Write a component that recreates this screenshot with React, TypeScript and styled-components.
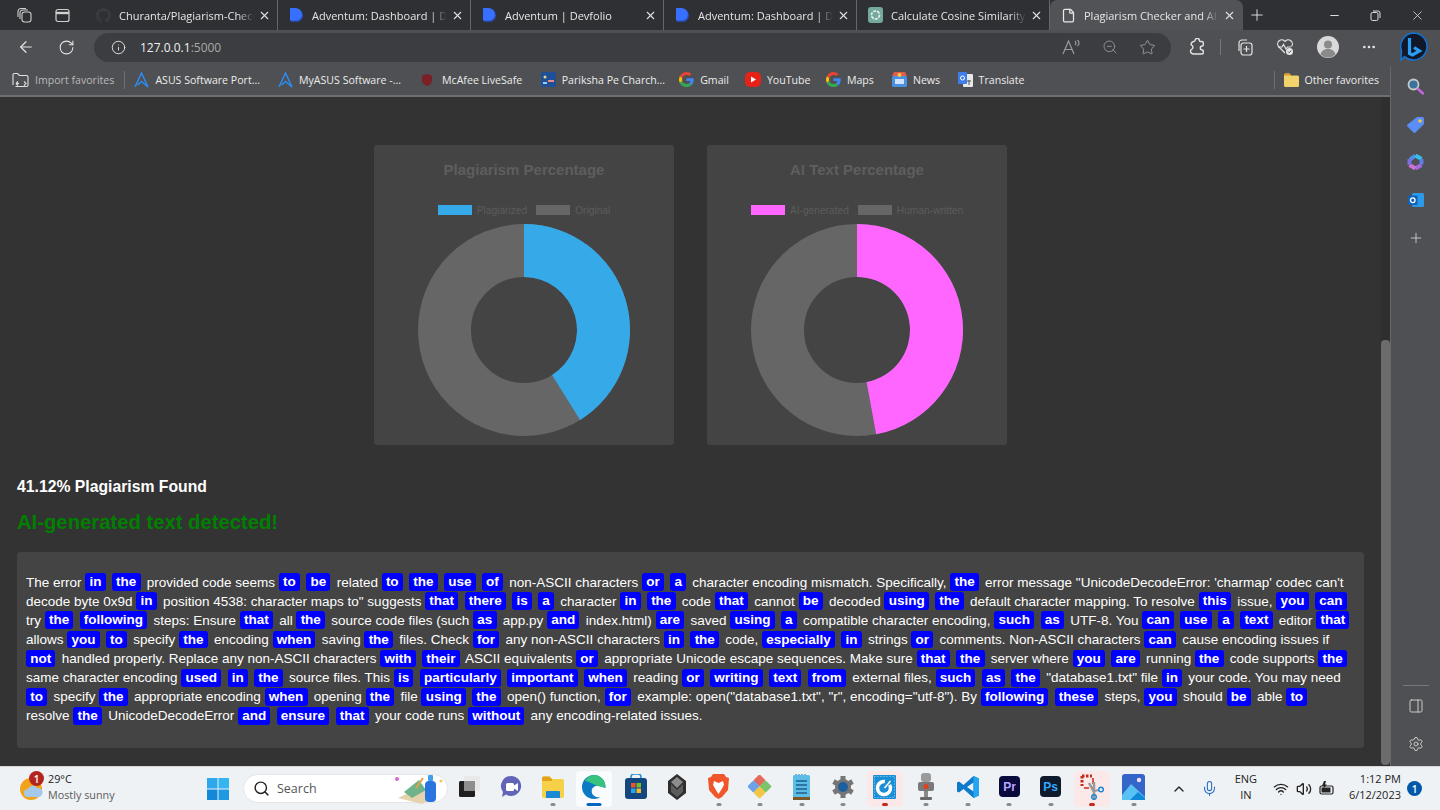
import React from "react";
import styled, { createGlobalStyle } from "styled-components";
import {
  ArrowLeft, RotateCw, Info, Star, ZoomOut, Plus, X, Minus, Search, Mic, Wifi, Volume2,
  ChevronUp, MoreHorizontal, Settings, PanelRight, File,
} from "lucide-react";

const Global = createGlobalStyle`
  html, body { margin: 0; padding: 0; width: 1440px; height: 810px; overflow: hidden; background: #333; }
  #root { width: 1440px; height: 810px; }
  * { box-sizing: border-box; }
`;

const uiFont = `"Open Sans", "Noto Sans", "Liberation Sans", sans-serif`;

const Screen = styled.div`
  width: 1440px; height: 810px; display: flex; flex-direction: column; overflow: hidden;
  font-family: "Liberation Sans", Arial, sans-serif;
`;
const TabBar = styled.div`
  height: 30px; flex: none; display: flex; align-items: center; background: #2f3033; color: #e8e8e8;
  font-family: ${uiFont}; font-size: 11px;
`;
const TabTools = styled.div`
  width: 85px; flex: none; display: flex; align-items: center; gap: 22px; padding-left: 16px; color: #d0d0d0;
`;
const Tab = styled.div<{ $active?: boolean }>`
  width: 193px; height: 30px; flex: none; display: flex; align-items: center; padding: 0 6px 0 11px;
  background: ${(p) => (p.$active ? "#525357" : "transparent")};
  border-radius: ${(p) => (p.$active ? "7px 7px 0 0" : "0")};
  border-right: 1px solid ${(p) => (p.$active ? "transparent" : "#66676a")};
`;
const TabTitle = styled.span`
  flex: 1; margin: 0 4px 0 8px; white-space: nowrap; overflow: hidden; color: #e6e6e6;
  -webkit-mask-image: linear-gradient(90deg, #000 88%, transparent);
  mask-image: linear-gradient(90deg, #000 88%, transparent);
`;
const WindowButtons = styled.div`
  margin-left: auto; display: flex; align-items: center; gap: 29px; padding-right: 15px; color: #ddd;
`;
const NewTab = styled.div`
  margin-left: 5px; display: flex; color: #ddd;
`;
const Toolbar = styled.div`
  height: 36px; flex: none; display: flex; align-items: center; background: #4f5053; color: #e4e4e4;
  padding: 0 0 2px 17px;
`;
const NavIcons = styled.div`
  display: flex; align-items: center; gap: 23px; width: 77px; flex: none;
`;
const AddressBar = styled.div`
  width: 1077px; height: 29px; flex: none; border-radius: 15px; background: #3c3d40; display: flex; align-items: center;
  padding: 0 15px 0 17px; font-family: ${uiFont}; font-size: 12px; color: #f0f0f0;
`;
const Url = styled.span`
  margin-left: 14px; span { color: #a9a9a9; }
`;
const AddressTools = styled.div`
  margin-left: auto; display: flex; align-items: center; gap: 21px; color: #9a9b9e;
`;
const ToolGroup = styled.div`
  flex: 1; display: flex; align-items: center; gap: 22px; padding-left: 17.5px; color: #e4e4e4;
`;
const ToolDivider = styled.div`
  width: 1px; height: 16px; background: #77787b; margin: 0 -7.5px;
`;
const BodyRow = styled.div`
  flex: 1; min-height: 0; display: flex;
`;
const MainColumn = styled.div`
  flex: 1; min-width: 0; display: flex; flex-direction: column;
`;
const FavoritesBar = styled.div`
  height: 31px; flex: none; display: flex; align-items: center; background: #4f5053; padding: 0 11px 2px 12px;
  font-family: ${uiFont}; font-size: 10.6px; color: #ececec; border-bottom: 2px solid #6e6f72;
`;
const FavItem = styled.div<{ $muted?: boolean; $gap?: number }>`
  display: flex; align-items: center; gap: 6px; white-space: nowrap; margin-right: ${(p) => p.$gap ?? 15}px;
  color: ${(p) => (p.$muted ? "#b9b9b9" : "#ececec")};
`;
const FavDivider = styled.div`
  width: 1px; height: 18px; background: #6e6f72; margin-right: 9px;
`;
const FavSpacer = styled.div`
  flex: 1;
`;
const PageRow = styled.div`
  flex: 1; min-height: 0; display: flex; background: #333;
`;
const Page = styled.main`
  flex: 1; min-width: 0; padding: 48px 17px 0; color: #fff; overflow: hidden;
`;
const Track = styled.div`
  width: 9px; flex: none; background: #2f2f2f; display: flex; flex-direction: column; justify-content: flex-end;
`;
const Thumb = styled.div`
  height: 425px; background: #6c6c6c; border-radius: 4px; margin-bottom: 1px;
`;
const Charts = styled.div`
  display: flex; justify-content: center; gap: 33px;
`;
const ChartCard = styled.section`
  width: 300px; height: 300px; background: #444; border-radius: 3px; padding-top: 16px;
  display: flex; flex-direction: column; align-items: center;
`;
const ChartTitle = styled.div`
  font-size: 15px; font-weight: 700; line-height: 18px; color: #5e5e5e;
`;
const Legend = styled.div`
  display: flex; align-items: center; margin-top: 25px; height: 12px; font-size: 10.2px; color: #5c5c5c;
`;
const Swatch = styled.span<{ $color: string }>`
  width: 34px; height: 10px; background: ${(p) => p.$color}; margin-right: 5px;
`;
const LegendLabel = styled.span`
  margin-right: 9px; &:last-child { margin-right: 0; }
`;
const Donut = styled.svg`
  margin-top: 7px; display: block;
`;
const Found = styled.h3`
  margin: 32px 0 0; font-size: 15.75px; line-height: 19px; font-weight: 700; color: #fff;
`;
const AiLabel = styled.h2`
  margin: 14px 0 0; font-size: 20.25px; line-height: 24px; font-weight: 700; color: #008000;
`;
const TextBox = styled.div`
  margin-top: 18px; height: 196px; width: 1347px; background: #444; border-radius: 4px; padding: 20.5px 9px 0;
  font-size: 13.5px; line-height: 19.15px; color: #fff;
`;
const TextLine = styled.div`
  white-space: pre; height: 19.15px;
`;
const Mark = styled.span`
  background: #0000ff; color: #fff; font-weight: 700; padding: 1.3px 4.2px; margin-right: 2.5px; border-radius: 3px;
`;
const Sidebar = styled.aside`
  width: 50px; flex: none; background: #4f5053; border-left: 1px solid #66676a; display: flex; flex-direction: column;
  align-items: center; padding: 1px 0 3px 0;
`;
const SideSlot = styled.div`
  height: 38px; display: flex; align-items: center; justify-content: center;
`;
const SideSpacer = styled.div`
  flex: 1;
`;
const SideRule = styled.div`
  width: 26px; height: 1px; background: #77787b; margin-bottom: 1px;
`;
const Taskbar = styled.footer`
  height: 44px; flex: none; background: #eff2f5; border-top: 1px solid #d5d7d9; display: flex; align-items: center;
  font-family: ${uiFont}; color: #222; font-size: 11.2px;
`;
const Weather = styled.div`
  width: 207px; flex: none; display: flex; align-items: center; padding-left: 20px; gap: 5px; position: relative;
`;
const WeatherBadge = styled.span`
  position: absolute; left: 29px; top: 0; width: 15px; height: 15px; border-radius: 50%; background: #b3261e;
  color: #fff; font-size: 10px; font-weight: 600; display: flex; align-items: center; justify-content: center;
`;
const WeatherText = styled.div`
  line-height: 16px; color: #222; font-size: 10.8px; padding-bottom: 3px;
  span { color: #5a5a5a; }
`;
const SearchBox = styled.div`
  width: 205px; height: 29px; flex: none; margin-left: 14px; border-radius: 15px; background: #fff; border: 1px solid #e3e5e8;
  display: flex; align-items: center; padding: 0 2px 0 9px; gap: 7px; color: #555; font-size: 12.5px;
  svg:last-child { margin-left: auto; }
`;
const TaskIcons = styled.div`
  display: flex; margin-left: 1px;
`;
const TaskSlot = styled.div<{ $tone?: "none" | "run" | "edge" | "pink" }>`
  width: 36px; height: 36px; margin: 0 2.75px; flex: none; display: flex; align-items: center; justify-content: center; position: relative;
  border-radius: 4px; padding-bottom: 4px;
  background: ${(p) => (p.$tone === "edge" ? "#fafbfc" : p.$tone === "pink" ? "#fbe9e9" : "transparent")};
  &::after {
    content: "";
    display: ${(p) => (p.$tone && p.$tone !== "none" ? "block" : "none")};
    position: absolute; bottom: 1px; left: 50%; transform: translateX(-50%); border-radius: 2px;
    height: ${(p) => (p.$tone === "edge" || p.$tone === "pink" ? 3 : 2.5)}px;
    width: ${(p) => (p.$tone === "edge" ? 15 : p.$tone === "pink" ? 6 : 5)}px;
    background: ${(p) => (p.$tone === "edge" ? "#0067c0" : p.$tone === "pink" ? "#c42b1c" : "#8a8a8a")};
  }
`;
const Tray = styled.div`
  margin-left: auto; display: flex; align-items: center; color: #222; padding-right: 18px;
`;
const TrayMic = styled.span`
  display: flex; margin-left: 14px;
`;
const Lang = styled.div`
  width: 34px; margin: 0 10px 3px 11px; text-align: center; line-height: 16px; font-size: 11px;
`;
const TrayIcons = styled.div`
  display: flex; align-items: center; gap: 7px;
`;
const Clock = styled.div`
  margin: 0 0 3px 15px; text-align: right; line-height: 16px; font-size: 11px;
`;
const Notify = styled.span`
  width: 15px; height: 15px; margin-left: 6px; border-radius: 50%; background: #0058a8; color: #fff;
  font-size: 10px; font-weight: 600; display: flex; align-items: center; justify-content: center;
`;

const Devfolio = () => (
  <svg width="15" height="16" viewBox="0 0 15 16">
    <path d="M2 2h5.5a6 6 0 0 1 0 12.8H2z" fill="#2a50c8" />
    <path d="M1 1h5.5a6 6 0 0 1 0 12.6H1z" fill="#3770ff" />
  </svg>
);
const GitHubDark = () => (
  <svg width="15" height="15" viewBox="0 0 16 16">
    <path fill="#3a3b3e" d="M8 0a8 8 0 0 0-2.5 15.6c.4.1.5-.2.5-.4v-1.4c-2.2.5-2.7-1-2.7-1-.4-.9-.9-1.2-.9-1.2-.7-.5.1-.5.1-.5.8.1 1.2.8 1.2.8.7 1.2 1.9.9 2.3.7.1-.5.3-.9.5-1.1-1.8-.2-3.6-.9-3.6-4 0-.9.3-1.6.8-2.1-.1-.2-.4-1 .1-2.1 0 0 .7-.2 2.2.8a7.6 7.6 0 0 1 4 0c1.5-1 2.2-.8 2.2-.8.4 1.1.2 1.9.1 2.1.5.6.8 1.3.8 2.1 0 3.1-1.9 3.7-3.7 3.9.3.3.6.8.6 1.5v2.2c0 .2.1.5.6.4A8 8 0 0 0 8 0z" />
  </svg>
);
const ChatGpt = () => (
  <svg width="15" height="16" viewBox="0 0 15 16">
    <rect width="15" height="16" rx="3" fill="#74aa9c" />
    <circle cx="7.5" cy="8" r="4" fill="none" stroke="#e8f2ef" strokeWidth="1.6" strokeDasharray="3 1" />
  </svg>
);
const TabsIcon = () => (
  <svg width="17" height="17" viewBox="0 0 17 17" fill="none" stroke="currentColor" strokeWidth="1.1">
    <rect x="6" y="5" width="9" height="10" rx="2.5" />
    <path d="M4 12V5.5A3 3 0 0 1 7 3h5M2 10V4.5A3 3 0 0 1 5 1.5h5" />
  </svg>
);
const VerticalTabs = () => (
  <svg width="15" height="15" viewBox="0 0 15 15" fill="none" stroke="currentColor" strokeWidth="1.2">
    <rect x="1" y="1.5" width="13" height="12" rx="2" />
    <path d="M1 5h13" strokeWidth="2.4" />
  </svg>
);
const RestoreIcon = () => (
  <svg width="11" height="11" viewBox="0 0 11 11" fill="none" stroke="currentColor">
    <rect x="1" y="2.5" width="7" height="8" rx="1.5" />
    <path d="M3 1h5a2 2 0 0 1 2 2v5" />
  </svg>
);
const ReadAloud = () => (
  <svg width="19" height="16" viewBox="0 0 19 16" fill="none" stroke="currentColor" strokeWidth="1.2">
    <path d="M1 15 6.5 2 12 15M3 10.5h7" />
    <path d="M13 2c1.2 1 1.2 3 0 4M15.5 1c2 1.6 2 4.5 0 6" />
  </svg>
);
const Puzzle = () => (
  <svg width="17" height="18" viewBox="0 0 17 18" fill="none" stroke="currentColor" strokeWidth="1.4">
    <path d="M6 2.5a2.2 2.2 0 0 1 4.4 0c0 .6.4 1 1 1h1.5c.8 0 1.4.6 1.4 1.4V7c0 .6-.5 1-1 1a2 2 0 0 0 0 4c.5 0 1 .4 1 1v1.5c0 .8-.6 1.5-1.4 1.5H5c-2.5 0-3.5-1.5-3.5-3.2 0-.9.5-1.3 1.1-1.5a2.2 2.2 0 0 0-.1-4.1C1.8 7.2 2 4 4.5 3.5c.8-.2 1.5-.3 1.5-1z" />
  </svg>
);
const Collections = () => (
  <svg width="18" height="18" viewBox="0 0 18 18" fill="none" stroke="currentColor" strokeWidth="1.2">
    <rect x="5" y="5" width="11" height="12" rx="2.5" />
    <path d="M3 13V5a3 3 0 0 1 3-3h5M10.5 8v6M7.5 11h6" />
  </svg>
);
const Health = () => (
  <svg width="19" height="18" viewBox="0 0 19 18" fill="none" stroke="currentColor" strokeWidth="1.2">
    <path d="M9 15 2.5 8.5a4 4 0 0 1 6.500-5 4 4 0 0 1 6.500 5" />
    <path d="M2 9h4l1.500-2.500L10 11l1.500-2H15" />
    <circle cx="13.5" cy="13.5" r="3.5" fill="#e6e6e6" stroke="none" />
    <path d="M12 13.500l1.200 1.200 2-2.200" stroke="#4f5053" strokeWidth="1" />
  </svg>
);
const Avatar = () => (
  <svg width="22" height="22" viewBox="0 0 22 22">
    <circle cx="11" cy="11" r="11" fill="#d9d9d9" />
    <circle cx="11" cy="8.5" r="4" fill="#8a8a8a" />
    <path d="M3.5 18.500c1-4 4-5.500 7.500-5.500s6.500 1.500 7.500 5.500A11 11 0 0 1 3.500 18.500z" fill="#8a8a8a" />
  </svg>
);
const BingBubble = () => (
  <svg width="29" height="30" viewBox="0 0 29 30">
    <path d="M14.5 1a13.5 13.5 0 1 1-9 23.600L2 28l.5-9A13.5 13.5 0 0 1 14.5 1z" fill="#10182a" stroke="#1173d4" strokeWidth="1.5" />
    <path d="M10.5 6v15.500l3 1.500 7-4-5.500-3.500" fill="none" stroke="#2a9df4" strokeWidth="3.200" />
  </svg>
);
const ImportFav = () => (
  <svg width="17" height="16" viewBox="0 0 17 16" fill="none" stroke="#e0e0e0" strokeWidth="1.1">
    <path d="M1 13V3a1.5 1.5 0 0 1 1.5-1.5h3L7.5 3.5h7A1.5 1.5 0 0 1 16 5v8a1.500 1.500 0 0 1-1.500 1.500h-11" />
    <path d="M4 11.500 6 13.500M4 11.500 6 9.500M4 11.500h3M12 13.500l2-2-2-2" />
  </svg>
);
const Asus = () => (
  <svg width="15" height="16" viewBox="0 0 15 16" fill="none" stroke="#2d8cf0" strokeWidth="1.5">
    <path d="M1 15 7.500 1 14 15 7.500 9.500 3.500 13" />
  </svg>
);
const McAfee = () => (
  <svg width="18" height="12" viewBox="-4 0 18 12">
    <path d="M0 1.500 5 0l5 1.500V7c0 2-2 4-5 5-3-1-5-3-5-5z" fill="#7a2027" />
  </svg>
);
const Pariksha = () => (
  <svg width="15" height="15" viewBox="0 0 15 15">
    <rect width="15" height="15" fill="#1f4f94" />
    <circle cx="4" cy="5" r="1.5" fill="#e8d38a" />
    <rect x="7" y="8" width="6" height="2" fill="#e88" />
    <rect x="2" y="10" width="4" height="2" fill="#9cf" />
  </svg>
);
const Google = ({ size = 15 }: { size?: number }) => (
  <svg width={size} height={size} viewBox="0 0 48 48">
    <path fill="#ea4335" d="M24 9.5c3.500 0 6.700 1.200 9.200 3.600l6.900-6.900C35.900 2.400 30.500 0 24 0 14.600 0 6.500 5.400 2.600 13.200l8 6.200C12.500 13.700 17.800 9.500 24 9.500z" />
    <path fill="#4285f4" d="M47 24.500c0-1.600-.1-3.100-.4-4.500H24v9h12.900c-.6 3-2.200 5.500-4.700 7.200l7.700 6C44.400 38.100 47 31.900 47 24.500z" />
    <path fill="#fbbc05" d="M10.600 28.600A14.500 14.500 0 0 1 9.800 24c0-1.600.3-3.200.8-4.600l-8-6.200A24 24 0 0 0 0 24c0 3.900.9 7.500 2.600 10.800z" />
    <path fill="#34a853" d="M24 48c6.500 0 11.900-2.100 15.900-5.800l-7.700-6c-2.200 1.500-4.900 2.300-8.200 2.300-6.200 0-11.500-4.200-13.400-9.900l-8 6.200C6.500 42.600 14.600 48 24 48z" />
  </svg>
);
const YouTube = () => (
  <svg width="16" height="15" viewBox="0 0 16 15">
    <rect width="16" height="15" rx="5" fill="#e62117" />
    <path d="M6 4.500v6l5-3z" fill="#fff" />
  </svg>
);
const News = () => (
  <svg width="15" height="15" viewBox="0 0 15 15">
    <rect y="4" width="15" height="11" rx="1.500" fill="#4a90e2" />
    <path d="M2 0h11l2 4H0z" fill="#e25c4a" />
    <circle cx="7.500" cy="3" r="2" fill="#f7c948" />
    <rect x="3" y="7" width="9" height="5" fill="#cfe3fa" />
  </svg>
);
const Translate = () => (
  <svg width="15" height="15" viewBox="0 0 15 15">
    <rect x="5" y="2" width="10" height="13" rx="1" fill="#e8e8e8" />
    <rect width="9" height="12" rx="1" fill="#3f7de8" />
    <circle cx="4.500" cy="6" r="2" fill="none" stroke="#fff" />
    <path d="M9 9h4M11 8v5" stroke="#555" />
  </svg>
);
const FolderIcon = () => (
  <svg width="15" height="14" viewBox="0 0 15 14">
    <path d="M0 2A1.500 1.500 0 0 1 1.500.5h4L7 2.500h6.500A1.500 1.500 0 0 1 15 4v8.500a1.500 1.500 0 0 1-1.500 1.500h-12A1.500 1.500 0 0 1 0 12.500z" fill="#f2d36b" />
    <path d="M0 2A1.500 1.500 0 0 1 1.500.5h4L7 2.500H0z" fill="#d99a2b" />
  </svg>
);
const SideSearch = () => (
  <svg width="17" height="17" viewBox="0 0 17 17">
    <circle cx="6.500" cy="6.500" r="5" fill="#39739e" stroke="#c8c8c8" strokeWidth="1.800" />
    <path d="M11 11l5 4.500" stroke="#c566e0" strokeWidth="2.500" strokeLinecap="round" />
  </svg>
);
const SideTag = () => (
  <svg width="17" height="17" viewBox="0 0 17 17">
    <path d="M10 1h5.500A1.500 1.500 0 0 1 17 2.500V8l-8.500 8.500a1.500 1.500 0 0 1-2 0L.5 10.500a1.500 1.500 0 0 1 0-2z" fill="#5a8df5" />
    <circle cx="13" cy="5" r="1.800" fill="#f5c542" />
  </svg>
);
const SideCopilot = () => (
  <svg width="17" height="18" viewBox="0 0 17 18" fill="none" strokeWidth="4">
    <path d="M3 6.500 8.500 2.500" stroke="#4f8fe8" />
    <path d="M8.500 2.500 14.500 6" stroke="#36c0e8" />
    <path d="M14.500 6v5.500" stroke="#5a7fe8" />
    <path d="M14.500 12 8.500 15.500" stroke="#a06ae0" />
    <path d="M8.500 15.500 2.500 12" stroke="#d070d8" />
    <path d="M2.500 12V6" stroke="#7d6ee0" />
  </svg>
);
const SideOutlook = () => (
  <svg width="16" height="16" viewBox="0 0 16 16">
    <rect x="4" y="1" width="12" height="14" rx="1.500" fill="#2c9ae8" />
    <rect y="3.500" width="9.500" height="9.500" rx="1" fill="#0f62b8" />
    <circle cx="4.750" cy="8.250" r="2.300" fill="none" stroke="#fff" strokeWidth="1.300" />
  </svg>
);

const Sun = () => (
  <svg width="23" height="26" viewBox="0 0 23 26">
    <circle cx="11" cy="13" r="11" fill="#f3a21b" />
    <path d="M8 21a4 4 0 0 1 0-8 5 5 0 0 1 9-1 4.500 4.500 0 0 1 2 9z" fill="#a5c9ea" />
  </svg>
);
const WinLogo = () => (
  <svg width="22" height="22" viewBox="0 0 22 22">
    <rect width="10.500" height="10.500" fill="#2ea8ec" />
    <rect x="11.500" width="10.500" height="10.500" fill="#35b4f2" />
    <rect y="11.500" width="10.500" height="10.500" fill="#1388d8" />
    <rect x="11.500" y="11.500" width="10.500" height="10.500" fill="#1f98e2" />
  </svg>
);
const SearchArt = () => (
  <svg width="50" height="34" viewBox="0 0 50 34">
    <path d="M3 26 24 16l18 8-15 8z" fill="#e6d2ac" />
    <path d="M9 20 24 8l7 10-14 8z" fill="#6fb38a" />
    <path d="M28 6 21 16" stroke="#e8a33d" strokeWidth="2" />
    <rect x="30" y="9" width="11" height="21" rx="4" fill="#2a74e0" />
    <rect x="33" y="3" width="5" height="6" rx="1" fill="#3fa0ee" />
    <circle cx="2" cy="7" r="2" fill="#d866d0" />
    <circle cx="46" cy="9" r="1.500" fill="#f2c94c" />
  </svg>
);
const TaskView = () => (
  <svg width="23" height="23" viewBox="0 0 23 23">
    <rect x="1" y="6" width="16" height="16" rx="1.500" fill="#1f1f1f" />
    <rect x="6" y="1" width="16" height="15" rx="1.500" fill="#e8e8e8" opacity="0.85" />
    <rect x="6" y="6" width="11" height="10" fill="#8e8e8e" />
  </svg>
);
const Teams = () => (
  <svg width="22" height="24" viewBox="0 0 22 24">
    <path d="M11 1a10 10 0 1 1-5 18.600L2 22l1-5A10 10 0 0 1 11 1z" fill="#6264b8" />
    <rect x="6" y="8" width="8" height="8" rx="1.500" fill="#fff" />
    <path d="M14 10.500l4-2.500v8l-4-2.500z" fill="#fff" />
  </svg>
);
const Explorer = () => (
  <svg width="24" height="24" viewBox="0 0 24 24">
    <path d="M1 3a1.500 1.500 0 0 1 1.500-1.500h6L11 4h10a2 2 0 0 1 2 2v15a2 2 0 0 1-2 2H3a2 2 0 0 1-2-2z" fill="#f7d04a" />
    <path d="M1 3a1.500 1.500 0 0 1 1.500-1.500h6L11 4v2H1z" fill="#e3a21a" />
    <path d="M5 23v-6a1 1 0 0 1 1-1h12a1 1 0 0 1 1 1v6z" fill="#1a8ad4" />
  </svg>
);
const Edge = () => (
  <svg width="24" height="24" viewBox="0 0 24 24">
    <path d="M12 0A12 12 0 0 0 0 12c0 6.600 5.400 12 12 12 2.500 0 4.800-.8 6.700-2-3 .8-9-.5-9-6 0-3 2.500-5 5.500-5 3.500 0 6 1.500 8.300 1.800C23.800 5.500 18.700 0 12 0z" fill="#0c7ac4" />
    <path d="M3 6c2-4 6-6 9-6 6.700 0 11.800 5.500 11.500 12.800-2.300-.3-4.800-1.800-8.300-1.800C8 7 4 6 3 6z" fill="#37c27e" />
    <circle cx="15" cy="15" r="3.500" fill="#fafbfc" />
  </svg>
);
const Store = () => (
  <svg width="22" height="25" viewBox="0 0 22 25">
    <path d="M6 6V3a3 3 0 0 1 3-3h4a3 3 0 0 1 3 3v3" fill="none" stroke="#1e8fd6" strokeWidth="1.500" />
    <rect y="4" width="22" height="21" rx="3" fill="#14477f" />
    <rect x="6" y="9" width="4.500" height="4.500" fill="#e8562a" />
    <rect x="11.500" y="9" width="4.500" height="4.500" fill="#7ab92c" />
    <rect x="6" y="14.500" width="4.500" height="4.500" fill="#2aa4e8" />
    <rect x="11.500" y="14.500" width="4.500" height="4.500" fill="#f5b82e" />
  </svg>
);
const Obsidian = () => (
  <svg width="20" height="26" viewBox="0 0 20 26">
    <path d="M10 0l9 7v12l-9 7-9-7V7z" fill="#2e2e2e" />
    <path d="M10 3l6 5-6 6-6-6z" fill="#8d8d8d" />
    <path d="M4 10l6 6 6-6v8l-6 5-6-5z" fill="#5c5c5c" />
  </svg>
);
const Brave = () => (
  <svg width="21" height="25" viewBox="0 0 21 25">
    <path d="M5 0h11l2 3 3 1-1 12-6 7-3.500 2L7 23l-6-7L0 4l3-1z" fill="#f1562b" />
    <path d="M6 7l4.500 2L15 7l1 4-3.500 6-2 3-2-3L5 11z" fill="#fff" />
  </svg>
);
const GitKraken = () => (
  <svg width="24" height="24" viewBox="0 0 24 24">
    <rect x="7" y="1" width="9" height="9" rx="1.500" fill="#e36a5c" transform="rotate(45 11.500 5.500)" />
    <rect x="1" y="7" width="9" height="9" rx="1.500" fill="#6ca2e8" transform="rotate(45 5.500 11.500)" />
    <rect x="13" y="7" width="9" height="9" rx="1.500" fill="#7cc46a" transform="rotate(45 17.500 11.500)" />
    <rect x="7" y="13" width="9" height="9" rx="1.500" fill="#f3c544" transform="rotate(45 11.500 17.500)" />
  </svg>
);
const Notepad = () => (
  <svg width="17" height="26" viewBox="0 0 17 26">
    <rect y="1" width="17" height="23" rx="1.500" fill="#5cbce8" />
    <path d="M3 1V0M6 1V0M9 1V0M12 1V0" stroke="#1a6a9c" />
    <path d="M3 7h11M3 11h11M3 15h11M3 19h11" stroke="#1d5f8a" strokeWidth="1.300" />
    <rect y="23" width="17" height="3" fill="#7a5a28" />
  </svg>
);
const GearApp = () => (
  <svg width="24" height="24" viewBox="0 0 24 24">
    <circle cx="12" cy="12" r="8" fill="#767676" />
    <path d="M12 1v22M2.500 6.500l19 11M2.500 17.500l19-11" stroke="#767676" strokeWidth="5" />
    <circle cx="12" cy="12" r="5" fill="#1d5f9e" />
  </svg>
);
const BlueDial = () => (
  <svg width="23" height="24" viewBox="0 0 23 24">
    <rect width="23" height="24" rx="1" fill="#1b8fd6" />
    <rect x="1.500" y="1.500" width="20" height="21" fill="none" stroke="#9fd4f2" strokeWidth="1" strokeDasharray="1 2" />
    <circle cx="11" cy="13" r="6.500" fill="none" stroke="#fff" strokeWidth="3.500" strokeDasharray="34 7" transform="rotate(-30 11 13)" />
    <path d="M11.500 13l6-7" stroke="#fff" strokeWidth="1.500" />
  </svg>
);
const MicApp = () => (
  <svg width="16" height="28" viewBox="0 0 16 28">
    <rect x="3" width="10" height="9" rx="3" fill="#9a9a9a" />
    <rect y="9" width="16" height="9" rx="2" fill="#7a7a7a" />
    <circle cx="8" cy="13.500" r="2.500" fill="#e0401c" />
    <rect x="6" y="18" width="4" height="6" fill="#8a8a8a" />
    <rect x="2" y="24" width="12" height="3" rx="1" fill="#6a6a6a" />
  </svg>
);
const VsCode = () => (
  <svg width="24" height="24" viewBox="0 0 24 24">
    <path d="M17.500 1 7.500 10 3 6.500 1 7.500v9l2 1 4.500-3.500 10 9 5.500-2.500V3.500zM17.500 7.500v9L11 12z" fill="#0f7acb" fillRule="evenodd" />
    <path d="M17.500 1 23 3.500v17L17.500 23z" fill="#23a5f0" />
  </svg>
);
const AdobeLabel = styled.text`
  font-family: "Liberation Sans", sans-serif; font-size: 12px; font-weight: 700;
`;
const Adobe = ({ label, bg, fg }: { label: string; bg: string; fg: string }) => (
  <svg width="21" height="21" viewBox="0 0 21 21">
    <rect width="21" height="21" rx="4" fill={bg} />
    <AdobeLabel x="10.500" y="15" textAnchor="middle" fill={fg}>{label}</AdobeLabel>
  </svg>
);
const Snip = () => (
  <svg width="24" height="26" viewBox="0 0 24 26" fill="none">
    <path d="M2 2h10M2 2v10" stroke="#c42b1c" strokeWidth="3" strokeDasharray="2.500 1.500" />
    <path d="M13 4v6M4 14h5" stroke="#c42b1c" strokeWidth="1.500" />
    <path d="M9 9l5 9M14 8v18" stroke="#9a9a9a" strokeWidth="2.500" />
    <path d="M14 17l5-1" stroke="#9a9a9a" strokeWidth="2" />
    <circle cx="21" cy="15.500" r="2.300" stroke="#1a8ad4" strokeWidth="1.500" />
    <circle cx="14" cy="23" r="2.300" stroke="#1a8ad4" strokeWidth="1.500" />
  </svg>
);
const Photos = () => (
  <svg width="23" height="26" viewBox="0 0 23 26">
    <rect width="23" height="26" rx="3" fill="#3366c8" />
    <circle cx="17" cy="6" r="2.200" fill="#f0e0f5" />
    <path d="M0 21l9-11 14 13v3H0z" fill="#58c3f2" />
    <path d="M8 26l8-8 7 6v2z" fill="#0f8ad8" />
  </svg>
);
const Battery = () => (
  <svg width="15" height="15" viewBox="0 0 15 15">
    <rect x="1" y="5" width="13" height="8" rx="1.500" fill="none" stroke="#222" strokeWidth="1.200" />
    <rect x="2.500" y="6.500" width="9" height="5" fill="#222" />
    <path d="M5 0 3 5h2L4 8l4-4.500H6l1-3.500z" fill="#222" />
  </svg>
);

const lines = [
  `The error [in] [the] provided code seems [to] [be] related [to] [the] [use] [of] non-ASCII characters [or] [a] character encoding mismatch. Specifically, [the] error message "UnicodeDecodeError: 'charmap' codec can't`,
  `decode byte 0x9d [in] position 4538: character maps to" suggests [that] [there] [is] [a] character [in] [the] code [that] cannot [be] decoded [using] [the] default character mapping. To resolve [this] issue, [you] [can]`,
  `try [the] [following] steps: Ensure [that] all [the] source code files (such [as] app.py [and] index.html) [are] saved [using] [a] compatible character encoding, [such] [as] UTF-8. You [can] [use] [a] [text] editor [that]`,
  `allows [you] [to] specify [the] encoding [when] saving [the] files. Check [for] any non-ASCII characters [in] [the] code, [especially] [in] strings [or] comments. Non-ASCII characters [can] cause encoding issues if`,
  `[not] handled properly. Replace any non-ASCII characters [with] [their] ASCII equivalents [or] appropriate Unicode escape sequences. Make sure [that] [the] server where [you] [are] running [the] code supports [the]`,
  `same character encoding [used] [in] [the] source files. This [is] [particularly] [important] [when] reading [or] [writing] [text] [from] external files, [such] [as] [the] "database1.txt" file [in] your code. You may need`,
  `[to] specify [the] appropriate encoding [when] opening [the] file [using] [the] open() function, [for] example: open("database1.txt", "r", encoding="utf-8"). By [following] [these] steps, [you] should [be] able [to]`,
  `resolve [the] UnicodeDecodeError [and] [ensure] [that] your code runs [without] any encoding-related issues.`,
];

const renderLine = (line: string) =>
  line.split(/(\[[^\]]+\])/).filter(Boolean).map((part, i) =>
    part.startsWith("[") ? <Mark key={i}>{part.slice(1, -1)}</Mark> : <React.Fragment key={i}>{part}</React.Fragment>
  );

const sectorPath = (percent: number) => {
  const outer = 106;
  const inner = 53;
  const c = 107;
  const a = (percent / 100) * 2 * Math.PI;
  const large = percent > 50 ? 1 : 0;
  const pt = (r: number) => `${c + r * Math.sin(a)} ${c - r * Math.cos(a)}`;
  return `M${c} ${c - outer}A${outer} ${outer} 0 ${large} 1 ${pt(outer)}L${pt(inner)}A${inner} ${inner} 0 ${large} 0 ${c} ${c - inner}Z`;
};

const DonutChart = ({ percent, color }: { percent: number; color: string }) => (
  <Donut width="214" height="214" viewBox="0 0 214 214">
    <circle cx="107" cy="107" r="79.5" fill="none" stroke="#666" strokeWidth="53" />
    <path d={sectorPath(percent)} fill={color} />
  </Donut>
);

const tabs = [
  { id: "gh", icon: <GitHubDark />, title: "Churanta/Plagiarism-Checker" },
  { id: "dash1", icon: <Devfolio />, title: "Adventum: Dashboard | Devfolio" },
  { id: "dev", icon: <Devfolio />, title: "Adventum | Devfolio" },
  { id: "dash2", icon: <Devfolio />, title: "Adventum: Dashboard | Devfolio" },
  { id: "gpt", icon: <ChatGpt />, title: "Calculate Cosine Similarity" },
];

const favorites: { icon: React.ReactNode; label: string; gap: number }[] = [
  { icon: <Asus />, label: "ASUS Software Port...", gap: 18 },
  { icon: <Asus />, label: "MyASUS Software -...", gap: 17 },
  { icon: <McAfee />, label: "McAfee LiveSafe", gap: 18.5 },
  { icon: <Pariksha />, label: "Pariksha Pe Charch...", gap: 14 },
  { icon: <Google />, label: "Gmail", gap: 16 },
  { icon: <YouTube />, label: "YouTube", gap: 15.5 },
  { icon: <Google />, label: "Maps", gap: 18 },
  { icon: <News />, label: "News", gap: 17.5 },
  { icon: <Translate />, label: "Translate", gap: 0 },
];

const taskApps: { icon: React.ReactNode; tone: "none" | "run" | "edge" | "pink" }[] = [
  { icon: <TaskView />, tone: "none" },
  { icon: <Teams />, tone: "none" },
  { icon: <Explorer />, tone: "run" },
  { icon: <Edge />, tone: "edge" },
  { icon: <Store />, tone: "none" },
  { icon: <Obsidian />, tone: "none" },
  { icon: <Brave />, tone: "run" },
  { icon: <GitKraken />, tone: "run" },
  { icon: <Notepad />, tone: "run" },
  { icon: <GearApp />, tone: "run" },
  { icon: <BlueDial />, tone: "pink" },
  { icon: <MicApp />, tone: "run" },
  { icon: <VsCode />, tone: "run" },
  { icon: <Adobe label="Pr" bg="#0a0a3c" fg="#b7a6ff" />, tone: "run" },
  { icon: <Adobe label="Ps" bg="#0f1a2c" fg="#31a8ff" />, tone: "run" },
  { icon: <Snip />, tone: "pink" },
  { icon: <Photos />, tone: "run" },
];

export default function App() {
  return (
    <Screen>
      <Global />
      <TabBar>
        <TabTools>
          <TabsIcon />
          <VerticalTabs />
        </TabTools>
        {tabs.map((t) => (
          <Tab key={t.id}>
            {t.icon}
            <TabTitle>{t.title}</TabTitle>
            <X size={13} color="#e0e0e0" />
          </Tab>
        ))}
        <Tab $active>
          <File size={15} color="#e8e8e8" />
          <TabTitle>Plagiarism Checker and AI Detector</TabTitle>
          <X size={13} color="#e0e0e0" />
        </Tab>
        <NewTab><Plus size={18} strokeWidth={1.3} /></NewTab>
        <WindowButtons>
          <Minus size={13} />
          <RestoreIcon />
          <X size={15} strokeWidth={1.3} />
        </WindowButtons>
      </TabBar>
      <Toolbar>
        <NavIcons>
          <ArrowLeft size={18} strokeWidth={1.6} />
          <RotateCw size={17} strokeWidth={1.5} />
        </NavIcons>
        <AddressBar>
          <Info size={15} strokeWidth={1.4} />
          <Url>127.0.0.1<span>:5000</span></Url>
          <AddressTools>
            <ReadAloud />
            <ZoomOut size={16} strokeWidth={1.3} />
            <Star size={17} strokeWidth={1.3} />
          </AddressTools>
        </AddressBar>
        <ToolGroup>
          <Puzzle />
          <ToolDivider />
          <Collections />
          <Health />
          <Avatar />
          <MoreHorizontal size={16} />
          <BingBubble />
        </ToolGroup>
      </Toolbar>
      <BodyRow>
        <MainColumn>
          <FavoritesBar>
            <FavItem $muted $gap={10}><ImportFav />Import favorites</FavItem>
            <FavDivider />
            {favorites.map((f) => (
              <FavItem key={f.label} $gap={f.gap}>{f.icon}{f.label}</FavItem>
            ))}
            <FavSpacer />
            <FavDivider />
            <FavItem $gap={0}><FolderIcon />Other favorites</FavItem>
          </FavoritesBar>
          <PageRow>
            <Page>
              <Charts>
                <ChartCard>
                  <ChartTitle>Plagiarism Percentage</ChartTitle>
                  <Legend>
                    <Swatch $color="#36a9e9" /><LegendLabel>Plagiarized</LegendLabel>
                    <Swatch $color="#666" /><LegendLabel>Original</LegendLabel>
                  </Legend>
                  <DonutChart percent={41.12} color="#36a9e9" />
                </ChartCard>
                <ChartCard>
                  <ChartTitle>AI Text Percentage</ChartTitle>
                  <Legend>
                    <Swatch $color="#ff66ff" /><LegendLabel>AI-generated</LegendLabel>
                    <Swatch $color="#666" /><LegendLabel>Human-written</LegendLabel>
                  </Legend>
                  <DonutChart percent={47.1} color="#ff66ff" />
                </ChartCard>
              </Charts>
              <Found>41.12% Plagiarism Found</Found>
              <AiLabel>AI-generated text detected!</AiLabel>
              <TextBox>
                {lines.map((l) => (
                  <TextLine key={l}>{renderLine(l)}</TextLine>
                ))}
              </TextBox>
            </Page>
            <Track><Thumb /></Track>
          </PageRow>
        </MainColumn>
        <Sidebar>
          <SideSlot><SideSearch /></SideSlot>
          <SideSlot><SideTag /></SideSlot>
          <SideSlot><SideCopilot /></SideSlot>
          <SideSlot><SideOutlook /></SideSlot>
          <SideSlot><Plus size={16} strokeWidth={1.2} color="#ddd" /></SideSlot>
          <SideSpacer />
          <SideRule />
          <SideSlot><PanelRight size={16} strokeWidth={1.3} color="#ddd" /></SideSlot>
          <SideSlot><Settings size={16} strokeWidth={1.3} color="#ddd" /></SideSlot>
        </Sidebar>
      </BodyRow>
      <Taskbar>
        <Weather>
          <Sun />
          <WeatherBadge>1</WeatherBadge>
          <WeatherText>29°C<br /><span>Mostly sunny</span></WeatherText>
        </Weather>
        <WinLogo />
        <SearchBox>
          <Search size={17} color="#222" />
          Search
          <SearchArt />
        </SearchBox>
        <TaskIcons>
          {taskApps.map((a, i) => (
            <TaskSlot key={i} $tone={a.tone}>{a.icon}</TaskSlot>
          ))}
        </TaskIcons>
        <Tray>
          <ChevronUp size={16} />
          <TrayMic><Mic size={17} color="#2b6cc4" strokeWidth={1.5} /></TrayMic>
          <Lang>ENG<br />IN</Lang>
          <TrayIcons>
            <Wifi size={16} />
            <Volume2 size={16} />
            <Battery />
          </TrayIcons>
          <Clock>1:12 PM<br />6/12/2023</Clock>
          <Notify>1</Notify>
        </Tray>
      </Taskbar>
    </Screen>
  );
}
